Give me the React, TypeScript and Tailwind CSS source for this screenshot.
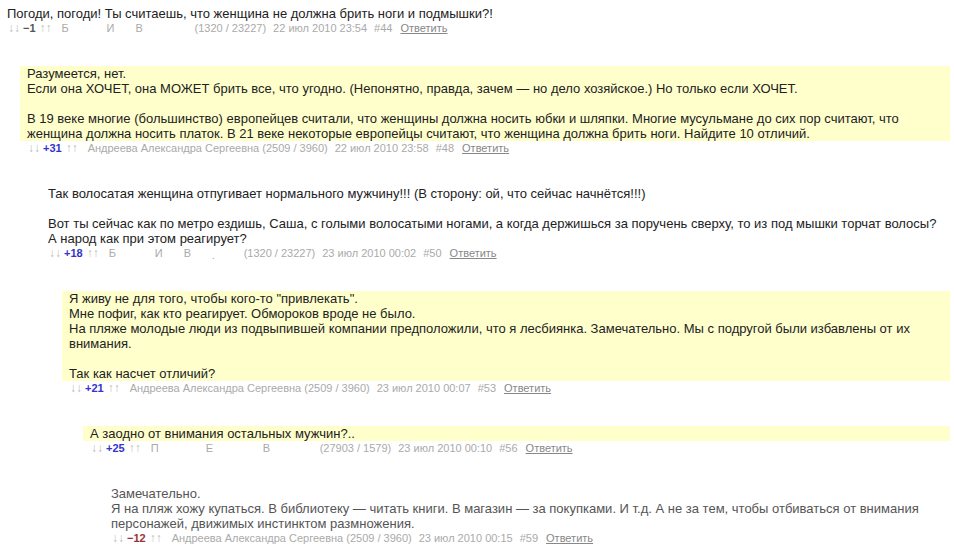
import React from "react";

type Meta = {
  score: string;
  scoreColor: string;
  author: React.ReactNode;
  date: string;
  num: string;
};

type Item = {
  indent: string;
  boxed: boolean;
  gray?: boolean;
  lines: string[];
  meta: Meta;
};

const Masked = ({ parts }: { parts: [string, string][] }) => (
  <span className="inline-flex">
    {parts.map(([ch, w], i) => (
      <span key={i} className={`inline-block ${w}`}>
        {ch}
      </span>
    ))}
  </span>
);

const items: Item[] = [
  {
    indent: "ml-0",
    boxed: false,
    lines: ["Погоди, погоди! Ты считаешь, что женщина не должна брить ноги и подмышки?!"],
    meta: {
      score: "−1",
      scoreColor: "text-[#555555]",
      author: (
        <>
          <Masked parts={[["Б", "w-[45px]"], ["И", "w-[29px]"], ["В", "w-[51px]"]]} />
          <span className="ml-[8px]">(1320 / 23227)</span>
        </>
      ),
      date: "22 июл 2010 23:54",
      num: "#44",
    },
  },
  {
    indent: "ml-[20px]",
    boxed: true,
    lines: [
      "Разумеется, нет.",
      "Если она ХОЧЕТ, она МОЖЕТ брить все, что угодно. (Непонятно, правда, зачем — но дело хозяйское.) Но только если ХОЧЕТ.",
      "",
      "В 19 веке многие (большинство) европейцев считали, что женщины должна носить юбки и шляпки. Многие мусульмане до сих пор считают, что",
      "женщина должна носить платок. В 21 веке некоторые европейцы считают, что женщина должна брить ноги. Найдите 10 отличий.",
    ],
    meta: {
      score: "+31",
      scoreColor: "text-[#3333cc]",
      author: "Андреева Александра Сергеевна (2509 / 3960)",
      date: "22 июл 2010 23:58",
      num: "#48",
    },
  },
  {
    indent: "ml-[41px]",
    boxed: false,
    lines: [
      "Так волосатая женщина отпугивает нормального мужчину!!! (В сторону: ой, что сейчас начнётся!!!)",
      "",
      "Вот ты сейчас как по метро ездишь, Саша, с голыми волосатыми ногами, а когда держишься за поручень сверху, то из под мышки торчат волосы?",
      "А народ как при этом реагирует?",
    ],
    meta: {
      score: "+18",
      scoreColor: "text-[#3333cc]",
      author: (
        <>
          <Masked parts={[["Б", "w-[46px]"], ["И", "w-[29px]"], ["В", "w-[28px]"], [".", "w-[24px] translate-y-[2px]"]]} />
          <span className="ml-[8px]">(1320 / 23227)</span>
        </>
      ),
      date: "23 июл 2010 00:02",
      num: "#50",
    },
  },
  {
    indent: "ml-[62px]",
    boxed: true,
    lines: [
      "Я живу не для того, чтобы кого-то \"привлекать\".",
      "Мне пофиг, как кто реагирует. Обмороков вроде не было.",
      "На пляже молодые люди из подвыпившей компании предположили, что я лесбиянка. Замечательно. Мы с подругой были избавлены от их",
      "внимания.",
      "",
      "Так как насчет отличий?",
    ],
    meta: {
      score: "+21",
      scoreColor: "text-[#3333cc]",
      author: "Андреева Александра Сергеевна (2509 / 3960)",
      date: "23 июл 2010 00:07",
      num: "#53",
    },
  },
  {
    indent: "ml-[83px]",
    boxed: true,
    lines: ["А заодно от внимания остальных мужчин?.."],
    meta: {
      score: "+25",
      scoreColor: "text-[#3333cc]",
      author: (
        <>
          <Masked parts={[["П", "w-[55px]"], ["Е", "w-[57px]"], ["В", "w-[49px]"]]} />
          <span className="ml-[8px]">(27903 / 1579)</span>
        </>
      ),
      date: "23 июл 2010 00:10",
      num: "#56",
    },
  },
  {
    indent: "ml-[104px]",
    boxed: false,
    gray: true,
    lines: [
      "Замечательно.",
      "Я на пляж хожу купаться. В библиотеку — читать книги. В магазин — за покупками. И т.д. А не за тем, чтобы отбиваться от внимания",
      "персонажей, движимых инстинктом размножения.",
    ],
    meta: {
      score: "−12",
      scoreColor: "text-[#993333]",
      author: "Андреева Александра Сергеевна (2509 / 3960)",
      date: "23 июл 2010 00:15",
      num: "#59",
    },
  },
];

const MetaRow = ({ m }: { m: Meta }) => (
  <div className="flex items-baseline h-[15px] leading-[15px] pl-[8px] text-[11px] text-[#aaaaaa] whitespace-nowrap">
    <span className="text-[12px] text-[#bbbbbb]">↓↓</span>
    <span className={`ml-[3px] font-bold ${m.scoreColor}`}>{m.score}</span>
    <span className="ml-[4px] text-[12px] text-[#bbbbbb]">↑↑</span>
    <span className="ml-[10px]">{m.author}</span>
    <span className="ml-[7px]">{m.date}</span>
    <span className="ml-[7px]">{m.num}</span>
    <a href="#" className="ml-[8px] text-[#888888] underline">
      Ответить
    </a>
  </div>
);

const Comment = ({ item, first }: { item: Item; first: boolean }) => (
  <div className={`${item.indent} mr-[4px] ${first ? "" : "mt-[30px]"}`}>
    <div
      className={`pl-[7px] text-[13px] leading-[15px] ${item.boxed ? "bg-[#ffffcc]" : ""} ${
        item.gray ? "text-[#555555]" : "text-[#222222]"
      }`}
    >
      {item.lines.map((l, i) => (
        <div key={i} className="h-[15px] whitespace-nowrap">
          {l}
        </div>
      ))}
    </div>
    <MetaRow m={item.meta} />
  </div>
);

export default function App() {
  return (
    <div
      className="min-h-screen w-full bg-white pt-[6px]"
      style={{ fontFamily: '"Liberation Sans", Arial, sans-serif' }}
    >
      {items.map((it, i) => (
        <Comment key={i} item={it} first={i === 0} />
      ))}
    </div>
  );
}
